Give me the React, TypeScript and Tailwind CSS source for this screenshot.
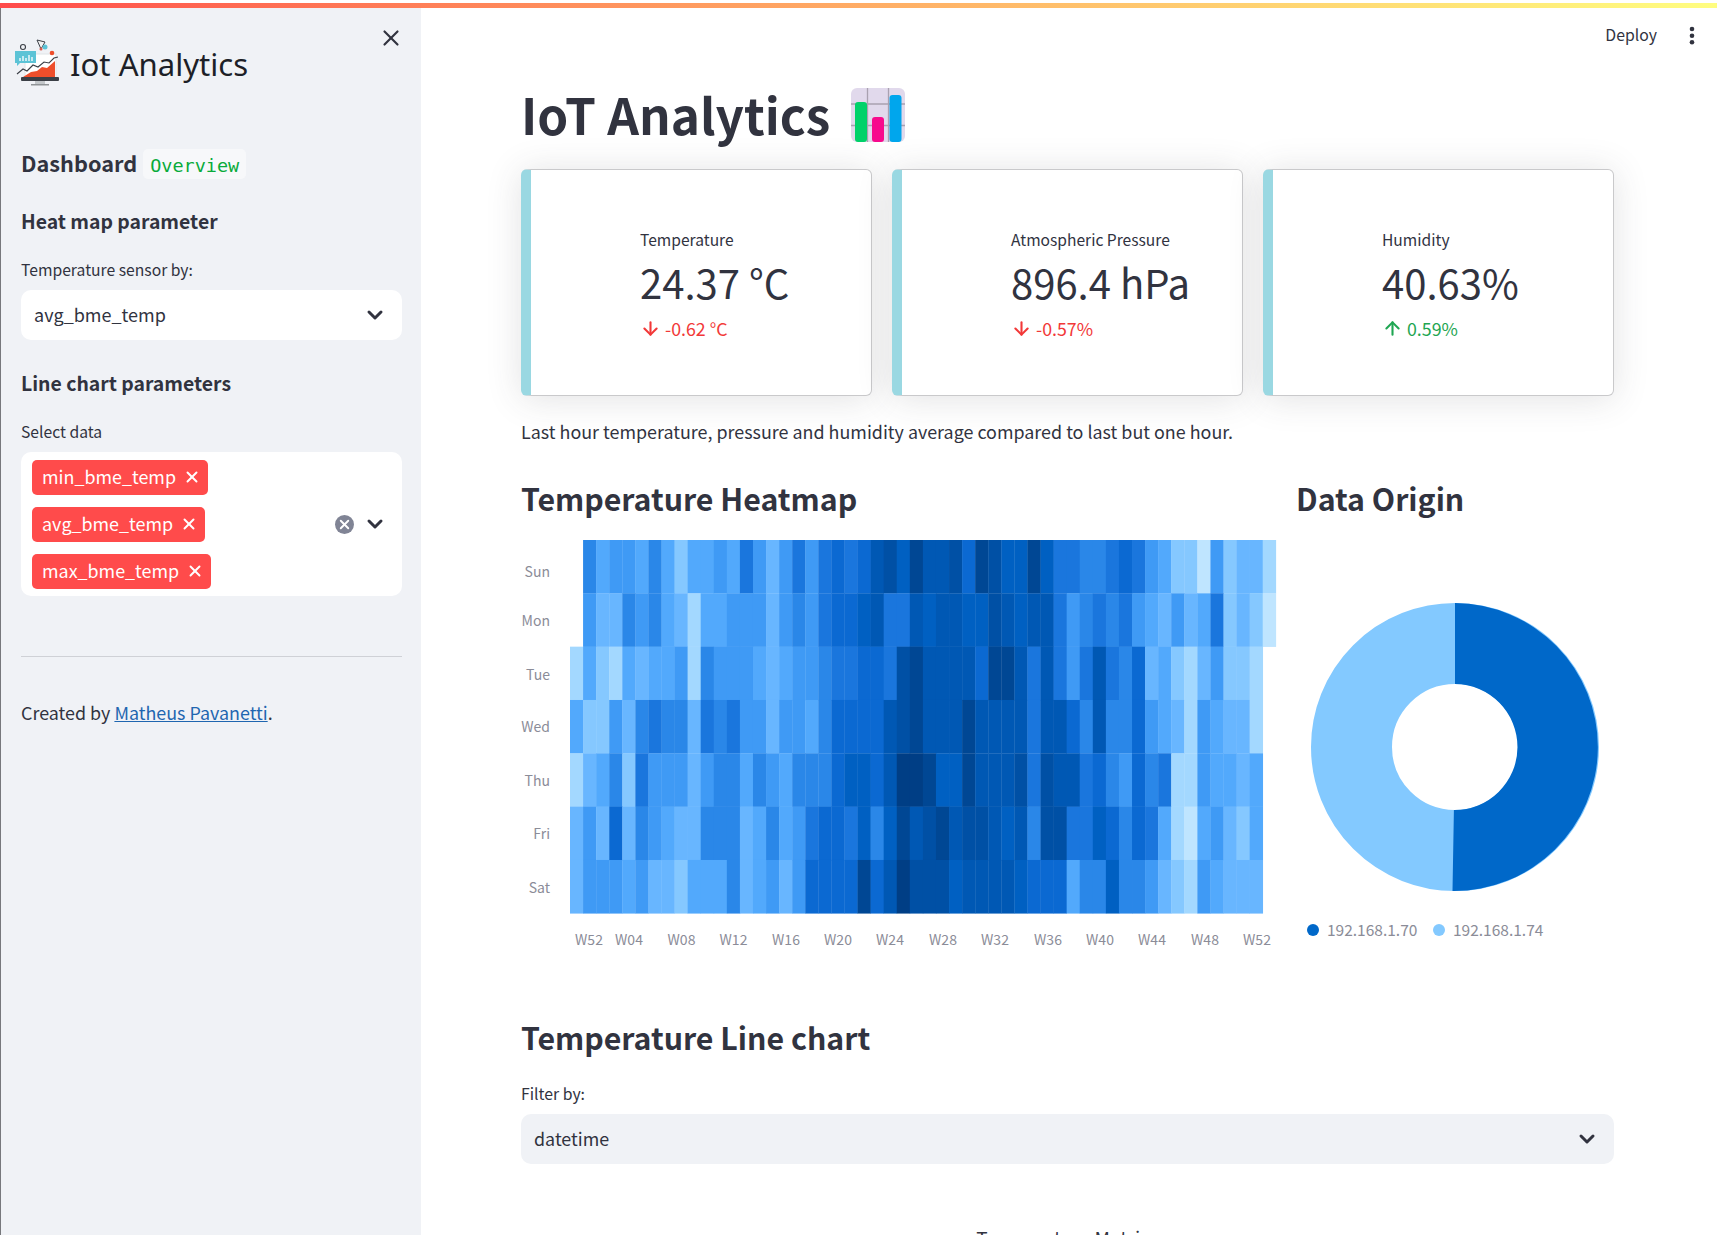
import { ArrowDown, ArrowUp, ChevronDown, X } from "lucide-react";

const palette: Record<string, string> = {
  "0": "#bfe5ff",
  "1": "#a3d8ff",
  "2": "#85c8ff",
  "3": "#68b6ff",
  "4": "#52a9fc",
  "5": "#3f9af5",
  "6": "#2a87e8",
  "7": "#1a76dd",
  "8": "#0b69d2",
  "9": "#0060c2",
  a: "#0058b4",
  b: "#0050a5",
  c: "#004794",
  d: "#003e85",
};

const rows = [
  { day: "Sun", y: 572, start: 1, cells: "6455464244 5475357578 78ab9caab8 cb99c97766 7875422052 331" },
  { day: "Mon", y: 620.5, start: 1, cells: "5336564314 4555356578 89a77a9aa9 9ba9aa7567 6754353472 320" },
  { day: "Tue", y: 674.5, start: 0, cells: "1421434451 6555434556 77887bcaaa a8cca7a757 a768342135 221" },
  { day: "Wed", y: 727, start: 0, cells: "4225367663 7675535546 8888abcaaa caaaa7aa86 a668543154 331" },
  { day: "Thu", y: 780.5, start: 0, cells: "1346275553 5664654666 8998addc99 caaab7baa7 8658671154 434" },
  { day: "Fri", y: 833.7, start: 0, cells: "3538365433 6663464578 87969cabca bba9a6bb77 9868741045 324" },
  { day: "Sat", y: 888, start: 0, cells: "3555453324 4463453588 88c8adbbb9 aaaa988846 6966532154 333" },
];

const weeks = [
  ["W52", 589],
  ["W04", 629],
  ["W08", 681.5],
  ["W12", 733.5],
  ["W16", 786],
  ["W20", 838],
  ["W24", 890],
  ["W28", 943],
  ["W32", 995],
  ["W36", 1048],
  ["W40", 1100],
  ["W44", 1152],
  ["W48", 1205],
  ["W52", 1257],
] as const;

const metrics = [
  { label: "Temperature", value: "24.37 °C", delta: "-0.62 °C", up: false },
  { label: "Atmospheric Pressure", value: "896.4 hPa", delta: "-0.57%", up: false },
  { label: "Humidity", value: "40.63%", delta: "0.59%", up: true },
];

const tags = ["min_bme_temp", "avg_bme_temp", "max_bme_temp"];

const Logo = () => (
  <svg width="46" height="50" viewBox="0 0 46 50" className="shrink-0">
    <rect x="11" y="17" width="31" height="24" fill="#fff" stroke="#dfe3e6" />
    <path d="M9 40l8-5 6-1 5-4 5 1 8-7v16z" fill="#ee4e2b" />
    <path d="M3 37l6-5 4 2 6-6 5 2 6-5 5 1 5-5 4-1" fill="none" stroke="#3b3f46" strokeWidth="1.100" />
    <rect x="7" y="40" width="38" height="4" rx="1" fill="#3b3f46" />
    <rect x="21" y="44" width="10" height="3" fill="#c3c7ca" />
    <rect x="17" y="47" width="18" height="1.500" fill="#8f9396" />
    <path d="M1 14h21v12H6l-3 3v-3H1z" fill="#5cc3d6" />
    <path d="M6 24v-3M9 24v-5M12 24v-3M15 24v-6M18 24v-4" stroke="#fff" strokeWidth="1.300" />
    <circle cx="9" cy="10" r="2.500" fill="none" stroke="#3b3f46" strokeWidth="1.100" />
    <path d="M23 3l8 2-4 7z" fill="#f4f4f4" stroke="#3b3f46" />
    <circle cx="31" cy="10" r="2.500" fill="#5cc3d6" />
    <circle cx="27" cy="12" r="1.500" fill="#d95a4a" />
    <circle cx="38" cy="16" r="2.300" fill="#ee4e2b" />
  </svg>
);

const BarChartEmoji = () => (
  <svg width="54" height="54" viewBox="0 0 54 54" className="shrink-0">
    <rect width="54" height="54" rx="6" fill="#e1d9ec" />
    <path d="M16.500 0v54M37.500 0v54M0 16h54M0 37.500h54" stroke="#a9a1b0" strokeWidth="1.300" />
    <rect x="4" y="14" width="12" height="40" rx="3" fill="#00d26a" />
    <rect x="21" y="29" width="12" height="25" rx="3" fill="#f70a8d" />
    <rect x="38.500" y="7" width="12" height="47" rx="3" fill="#00a6ed" />
  </svg>
);

const Heatmap = () => (
  <svg width="755" height="468" viewBox="521 522 755 468" className="block overflow-visible">
    {rows.map((row, r) => {
      const top = 540 + r * 53.33;
      return row.cells
        .replace(/ /g, "")
        .split("")
        .map((level, i) => (
          <rect
            key={`${row.day}-${i}`}
            x={570 + (row.start + i) * 13.07}
            y={top}
            width={13.4}
            height={53.6}
            fill={palette[level]}
          />
        ));
    })}
    {rows.map((row) => (
      <text key={row.day} x={550} y={row.y + 5} textAnchor="end" fontSize={14} fill="#8b8c98">
        {row.day}
      </text>
    ))}
    {weeks.map(([week, x], i) => (
      <text key={i} x={x} y={945} textAnchor="middle" fontSize={14} fill="#8b8c98">
        {week}
      </text>
    ))}
  </svg>
);

const Donut = () => (
  <svg width="318" height="468" viewBox="1296 522 318 468" className="block">
    <circle cx={1455} cy={747} r={103.5} fill="none" stroke="#83c9ff" strokeWidth={81} />
    <path
      d="M1455 603A144 144 0 1 1 1452.500 891L1453.900 810A63 63 0 1 0 1455 684Z"
      fill="#0068c9"
    />
    <circle cx={1313} cy={930} r={6} fill="#0068c9" />
    <text x={1327} y={935.500} fontSize={15.500} fill="#8b8c98">
      192.168.1.70
    </text>
    <circle cx={1439} cy={930} r={6} fill="#83c9ff" />
    <text x={1453} y={935.500} fontSize={15.500} fill="#8b8c98">
      192.168.1.74
    </text>
  </svg>
);

const Sidebar = () => (
  <aside className="w-[421px] shrink-0 h-full bg-[#f0f2f6] border-l border-[#77787c] pl-[20px] pr-[19px]">
    <div className="relative flex items-center h-[56px] mt-[26px] -ml-[7px] gap-[10px]">
      <Logo />
      <span className="font-['Noto_Sans',sans-serif] text-[31.100px] leading-[40px] pt-[3px] text-[#1d1f27]">Iot Analytics</span>
      <X className="absolute right-[-2px] top-[-9px] w-[26px] h-[26px] text-[#31333f]" strokeWidth={2} />
    </div>
    <div className="flex items-center h-[32px] mt-[58px]">
      <span className="text-[21.700px] leading-[30px] pb-[2px] font-semibold text-[#31333f]">Dashboard</span>
      <code className="ml-[6px] px-[7px] h-[30px] leading-[33px] rounded-[5px] bg-[#f7f8fa] text-[#09ab3b] text-[18.500px] font-['DejaVu_Sans_Mono',monospace]">
        Overview
      </code>
    </div>
    <h4 className="text-[19.400px] leading-[32px] font-semibold text-[#31333f] mt-[25px]">Heat map parameter</h4>
    <label className="block text-[15.700px] leading-[24px] text-[#31333f] mt-[21px]">Temperature sensor by:</label>
    <div className="flex items-center justify-between h-[50px] mt-[8px] pl-[13px] pr-[15px] rounded-[10px] bg-white">
      <span className="text-[18px] pb-[2px] text-[#31333f]">avg_bme_temp</span>
      <ChevronDown className="w-[24px] h-[24px] text-[#31333f]" strokeWidth={3} />
    </div>
    <h4 className="text-[19.400px] leading-[32px] font-semibold text-[#31333f] mt-[27px]">Line chart parameters</h4>
    <label className="block text-[15.700px] leading-[24px] text-[#31333f] mt-[21px]">Select data</label>
    <div className="flex items-center justify-between h-[144px] mt-[8px] pl-[11px] pr-[15px] rounded-[10px] bg-white">
      <div className="flex flex-col items-start gap-[12px]">
        {tags.map((tag) => (
          <div
            key={tag}
            className="flex items-center h-[35px] pl-[10px] pr-[7px] gap-[7px] rounded-[5px] bg-[#ff4b4b] text-white text-[17.900px]"
          >
            <span className="pb-[2px]">{tag}</span>
            <X className="w-[18px] h-[18px]" strokeWidth={2.6} />
          </div>
        ))}
      </div>
      <div className="flex items-center gap-[9px]">
        <span className="flex items-center justify-center w-[19px] h-[19px] rounded-full bg-[#808495]">
          <X className="w-[15px] h-[15px] text-white" strokeWidth={3} />
        </span>
        <ChevronDown className="w-[24px] h-[24px] text-[#31333f]" strokeWidth={3} />
      </div>
    </div>
    <hr className="mt-[60px] border-0 border-t border-[#cfd1d6]" />
    <p className="mt-[40px] text-[17.900px] leading-[30px] pb-[2px] text-[#31333f]">
      Created by <a className="text-[#1f66b0] underline">Matheus Pavanetti</a>.
    </p>
  </aside>
);

const MetricCard = ({ label, value, delta, up }: (typeof metrics)[number]) => (
  <div className="flex-1 h-[227px] bg-white rounded-[6px] border border-[#c9c9cb] border-l-[10px] border-l-[#9ad8e2] shadow-[0_2.800px_35px_0_rgba(58,59,69,0.15)] pl-[109px] pt-[57px]">
    <div className="text-[15.600px] leading-[24px] text-[#31333f]">{label}</div>
    <div className="text-[40px] leading-[56px] text-[#31333f] mt-[3px]">{value}</div>
    <div className={`flex items-center mt-[6px] text-[17.800px] leading-[24px] ${up ? "text-[#1fa652]" : "text-[#f23838]"}`}>
      {up ? (
        <ArrowUp className="w-[21px] h-[21px]" strokeWidth={2.4} />
      ) : (
        <ArrowDown className="w-[21px] h-[21px]" strokeWidth={2.4} />
      )}
      <span className="ml-[4px]">{delta}</span>
    </div>
  </div>
);

export default function App() {
  return (
    <div className="h-screen w-full overflow-hidden bg-white flex flex-col font-['Noto_Sans_CJK_SC','Noto_Sans',sans-serif] text-[#31333f]">
      <div className="h-[3px] shrink-0 bg-white" />
      <div className="h-[5px] shrink-0 bg-gradient-to-r from-[#ff4b4b] to-[#fffd80]" />
      <div className="flex flex-1 min-h-0">
        <Sidebar />
        <main className="flex-1 min-w-0 pl-[100px] pr-[103px]">
          <div className="flex items-center justify-end h-[54px] -mr-[81px] gap-[32px]">
            <span className="text-[15.800px] text-[#31333f]">Deploy</span>
            <svg width="6" height="20" viewBox="0 0 6 20">
              <circle cx="3" cy="4" r="2.300" fill="#31333f" />
              <circle cx="3" cy="10.700" r="2.300" fill="#31333f" />
              <circle cx="3" cy="17.300" r="2.300" fill="#31333f" />
            </svg>
          </div>
          <h1 className="flex items-center gap-[21px] h-[66px] mt-[20px] text-[49.500px] leading-[64px] font-bold text-[#31333f]">
            <span className="pb-[2px]">IoT Analytics</span>
            <BarChartEmoji />
          </h1>
          <div className="flex gap-[20px] mt-[21px]">
            {metrics.map((metric) => (
              <MetricCard key={metric.label} {...metric} />
            ))}
          </div>
          <p className="mt-[20px] text-[17.900px] leading-[30px] pb-[2px] text-[#31333f]">
            Last hour temperature, pressure and humidity average compared to last but one hour.
          </p>
          <div className="flex gap-[20px] mt-[30px]">
            <section className="w-[755px]">
              <h3 className="text-[30.300px] leading-[40px] pb-[4px] font-semibold">Temperature Heatmap</h3>
              <Heatmap />
            </section>
            <section className="flex-1">
              <h3 className="text-[30.300px] leading-[40px] pb-[4px] font-semibold">Data Origin</h3>
              <Donut />
            </section>
          </div>
          <h3 className="mt-[26px] text-[30.300px] leading-[42px] pb-[2px] font-semibold">Temperature Line chart</h3>
          <label className="block mt-[22px] text-[15.800px] leading-[24px] text-[#31333f]">Filter by:</label>
          <div className="flex items-center justify-between h-[50px] mt-[8px] pl-[13px] pr-[15px] rounded-[10px] bg-[#f0f2f6]">
            <span className="text-[17.900px] pb-[2px] text-[#31333f]">datetime</span>
            <ChevronDown className="w-[24px] h-[24px] text-[#31333f]" strokeWidth={3} />
          </div>
          <div className="mt-[62px] text-center text-[19px] leading-[24px] text-[#31333f]">Temperature Metrics</div>
        </main>
      </div>
    </div>
  );
}
